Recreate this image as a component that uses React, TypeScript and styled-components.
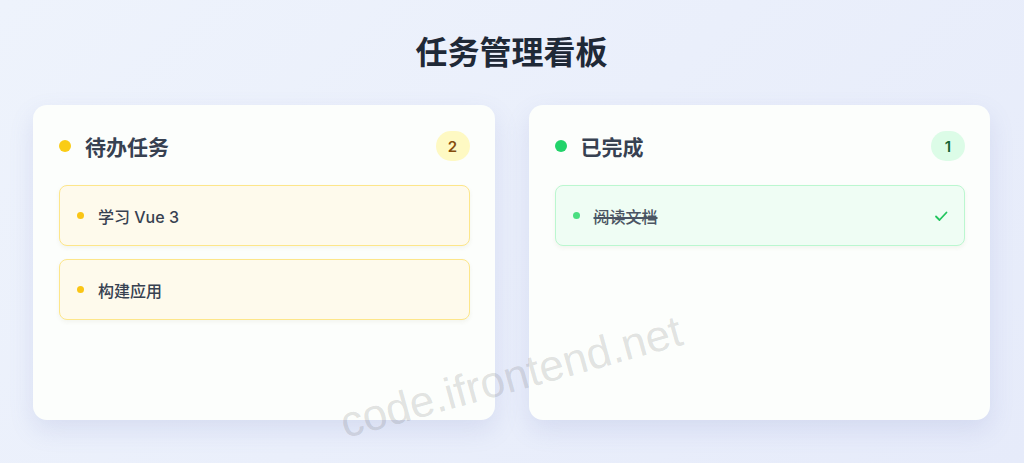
import React from "react";
import styled, {createGlobalStyle} from "styled-components";

type Task = {
    id: number;
    title: string;
};

type Tone = "todo" | "done";

const tones = {
    todo: {dot: "#facc15", itemDot: "#fac515", badgeBg: "#fef9c3", badgeText: "#854d0e", itemBg: "#fefaec", itemBorder: "#fde68a"},
    done: {dot: "#22d36a", itemDot: "#4ade80", badgeBg: "#dcfce7", badgeText: "#166534", itemBg: "#effdf4", itemBorder: "#bbf7d0"},
};

const GlobalStyle = createGlobalStyle`
  html, body {
    margin: 0;
    padding: 0;
  }
  body {
    font-family: "Inter", "Noto Sans CJK SC", sans-serif;
    background: linear-gradient(135deg, #eef3fc 0%, #e6ebfa 100%);
    min-height: 463px;
  }
`;

const Page = styled.div`
  position: relative;
  padding: 35px 34px 0 33px;
  height: 463px;
  box-sizing: border-box;
  overflow: hidden;
`;

const Heading = styled.h1`
  margin: 0 0 34px;
  text-align: center;
  font-size: 32px;
  line-height: 36px;
  font-weight: 700;
  color: #1f2937;
`;

const Board = styled.div`
  display: grid;
  grid-template-columns: 1fr 1fr;
  gap: 34px;
`;

const Column = styled.section`
  height: 315px;
  box-sizing: border-box;
  padding: 26px 25px 26px 26px;
  background: #fcfefc;
  border-radius: 14px;
  box-shadow: 0 10px 24px rgba(110, 125, 190, 0.16);
`;

const ColumnHeader = styled.div`
  display: flex;
  align-items: center;
  height: 30px;
  margin-bottom: 24px;
`;

const Dot = styled.span<{ $color: string; $size: number }>`
  width: ${p => p.$size}px;
  height: ${p => p.$size}px;
  border-radius: 50%;
  background: ${p => p.$color};
  flex-shrink: 0;
`;

const ColumnTitle = styled.h2`
  margin: 0 0 0 14px;
  font-size: 21px;
  font-weight: 700;
  color: #374151;
  flex: 1;
`;

const Badge = styled.span<{ $bg: string; $color: string }>`
  min-width: 34px;
  height: 30px;
  box-sizing: border-box;
  padding: 0 10px;
  border-radius: 999px;
  display: flex;
  align-items: center;
  justify-content: center;
  font-size: 15px;
  font-weight: 600;
  background: ${p => p.$bg};
  color: ${p => p.$color};
`;

const List = styled.div`
  display: flex;
  flex-direction: column;
  gap: 13px;
`;

const Item = styled.div<{ $bg: string; $border: string }>`
  display: flex;
  align-items: center;
  height: 61px;
  box-sizing: border-box;
  padding: 0 16px 0 17px;
  background: ${p => p.$bg};
  border: 1px solid ${p => p.$border};
  border-radius: 8px;
  box-shadow: 0 2px 4px rgba(120, 110, 60, 0.07);
`;

const ItemText = styled.span<{ $done?: boolean }>`
  margin-left: 14px;
  flex: 1;
  font-size: 16px;
  font-weight: 500;
  color: ${p => (p.$done ? "#4b5563" : "#374151")};
  text-decoration: ${p => (p.$done ? "line-through" : "none")};
  text-decoration-thickness: 1.5px;
  text-decoration-color: #4b5563;
`;

const Watermark = styled.div`
  position: absolute;
  left: 348px;
  top: 398px;
  font-family: "Liberation Sans", Arial, sans-serif;
  font-size: 44px;
  color: rgba(90, 90, 90, 0.18);
  transform: rotate(-15.5deg);
  transform-origin: left bottom;
  white-space: nowrap;
  pointer-events: none;
`;

function CheckMark() {
    return (
        <svg width="14" height="14" viewBox="0 0 14 14" fill="none">
            <path d="M2 7.5 L5.5 11 L12.5 3.5" stroke="#22c55e" strokeWidth="1.8" strokeLinecap="round" strokeLinejoin="round"/>
        </svg>
    );
}

function TaskColumn({title, tone, tasks}: { title: string; tone: Tone; tasks: Array<Task> }) {
    const t = tones[tone];
    return (
        <Column>
            <ColumnHeader>
                <Dot $color={t.dot} $size={12}/>
                <ColumnTitle>{title}</ColumnTitle>
                <Badge $bg={t.badgeBg} $color={t.badgeText}>{tasks.length}</Badge>
            </ColumnHeader>
            <List>
                {tasks.map(task => (
                    <Item key={task.id} $bg={t.itemBg} $border={t.itemBorder}>
                        <Dot $color={t.itemDot} $size={7}/>
                        <ItemText $done={tone === "done"}>{task.title}</ItemText>
                        {tone === "done" && <CheckMark/>}
                    </Item>
                ))}
            </List>
        </Column>
    );
}

export default function App() {
    const todo: Array<Task> = [
        {id: 1, title: "学习 Vue 3"},
        {id: 2, title: "构建应用"},
    ];
    const done: Array<Task> = [{id: 3, title: "阅读文档"}];
    return (
        <>
            <GlobalStyle/>
            <Page>
                <Heading>任务管理看板</Heading>
                <Board>
                    <TaskColumn title="待办任务" tone="todo" tasks={todo}/>
                    <TaskColumn title="已完成" tone="done" tasks={done}/>
                </Board>
                <Watermark>code.ifrontend.net</Watermark>
            </Page>
        </>
    );
}
